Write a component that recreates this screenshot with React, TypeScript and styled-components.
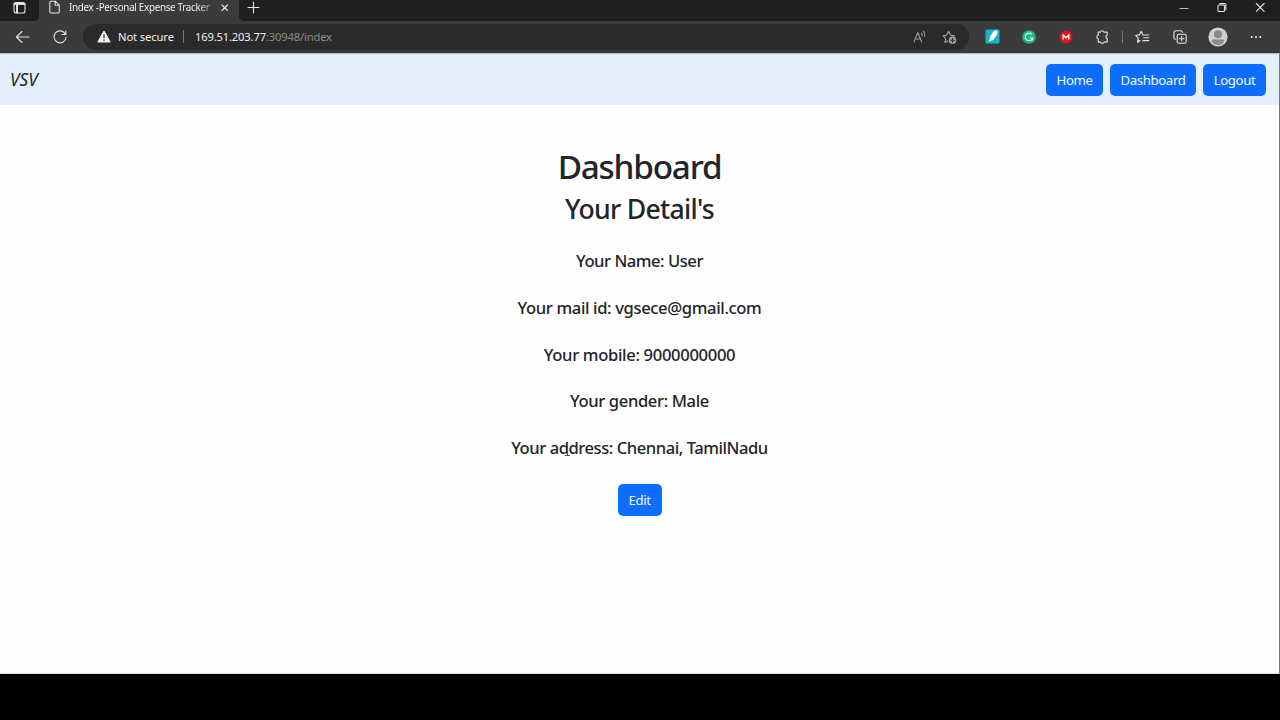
import React from "react";
import styled, { createGlobalStyle } from "styled-components";

const GlobalStyle = createGlobalStyle`
  *, *::before, *::after { box-sizing: border-box; }
  body { margin: 0; background: #000; font-family: "Noto Sans", "Open Sans", sans-serif; overflow: hidden; }
  h1, h2, p { margin: 0; }
  svg { display: block; flex: none; overflow: visible; }
`;

const Screen = styled.div`
  width: 1280px;
  height: 720px;
  display: flex;
  flex-direction: column;
  background: #000;
`;

const TabStrip = styled.div`
  height: 21px;
  display: flex;
  background: #3b3b3b;
`;

const TabActions = styled.div`
  width: 39px;
  padding: 1px 0 0 13px;
  background: #1f1f1e;
  border-bottom-right-radius: 5px;
`;

const Tab = styled.div`
  width: 200px;
  display: flex;
  align-items: flex-start;
  padding-left: 10px;
`;

const TabTitle = styled.span`
  width: 144px;
  margin-left: 8px;
  margin-top: -1px;
  white-space: nowrap;
  color: #f0f0f0;
  font-size: 9.9px;
  line-height: 16px;
  letter-spacing: -0.32px;
  mask-image: linear-gradient(to right, #000 128px, rgba(0, 0, 0, 0.3) 144px);
`;

const CloseTab = styled.div`
  margin: 4px 0 0 8px;
`;

const StripRest = styled.div`
  flex: 1;
  display: flex;
  justify-content: space-between;
  padding: 1px 15px 0 8px;
  background: #1f1f1e;
  border-bottom-left-radius: 5px;
`;

const WindowControls = styled.div`
  display: flex;
  gap: 29px;
  padding-top: 2px;
`;

const Toolbar = styled.div`
  height: 32px;
  display: flex;
  align-items: center;
  padding: 0 0 1px 15px;
  background: #3b3b3b;
`;

const ReloadSlot = styled.div`
  margin: 0 16px 0 23px;
`;

const AddressBar = styled.div`
  width: 886px;
  height: 26px;
  display: flex;
  align-items: center;
  padding: 0 12px 0 14px;
  border-radius: 13px;
  background: #2a2a2a;
`;

const Security = styled.span`
  margin-left: 7px;
  width: 65px;
  white-space: nowrap;
  color: #f2f2f2;
  font-size: 11.2px;
  letter-spacing: -0.1px;
`;

const Separator = styled.i<{ $height: number }>`
  width: 1px;
  height: ${(p) => p.$height}px;
  background: #777;
`;

const Url = styled.span`
  flex: 1;
  margin-left: 11px;
  color: #8d8d8d;
  font-size: 11.2px;
  letter-spacing: -0.16px;
`;

const Host = styled.span`
  color: #f2f2f2;
`;

const AddressIcons = styled.div`
  display: flex;
  align-items: center;
  gap: 15px;
`;

const IconGroup = styled.div<{ $slot: number; $before: number; $after: number }>`
  display: grid;
  grid-template-columns: repeat(4, ${(p) => p.$slot}px);
  place-items: center;
  margin: 0 ${(p) => p.$after}px 0 ${(p) => p.$before}px;
`;

const Page = styled.div`
  height: 621px;
  border-top: 1px solid #aeb8c1;
  border-right: 1px solid #777;
  border-bottom: 1px solid #dfe3e3;
  background: #fefefe;
`;

const NavBar = styled.nav`
  height: 51px;
  display: flex;
  align-items: center;
  justify-content: space-between;
  padding: 0 13px 0 10px;
  background: #e3f0fb;
`;

const Brand = styled.span`
  color: #202529;
  font-size: 17.3px;
  font-style: italic;
  font-weight: 400;
  letter-spacing: 0;
`;

const NavLinks = styled.div`
  display: flex;
  gap: 7px;
`;

const Button = styled.button<{ $width: number }>`
  width: ${(p) => p.$width}px;
  height: 32px;
  padding: 0;
  border: 0;
  border-radius: 5px;
  background: #0d6efd;
  color: #f4f8ff;
  font: 400 13.2px "Noto Sans", "Open Sans", sans-serif;
  letter-spacing: -0.38px;
`;

const Content = styled.main`
  display: flex;
  flex-direction: column;
  align-items: center;
  padding-top: 41px;
  color: #212529;
  font-weight: 500;
  white-space: nowrap;
`;

const Title = styled.h1`
  font-size: 33.3px;
  font-weight: 500;
  line-height: 40px;
  letter-spacing: -1.2px;
`;

const Subtitle = styled.h2`
  margin-top: 7.4px;
  font-size: 26.6px;
  font-weight: 500;
  line-height: 32px;
  letter-spacing: -0.7px;
`;

const Details = styled.div`
  display: flex;
  flex-direction: column;
  align-items: center;
  gap: 26.7px;
  margin: 26px 0 25.6px;
`;

const Detail = styled.p<{ $spacing: number }>`
  position: relative;
  font-size: 16.6px;
  line-height: 20px;
  letter-spacing: ${(p) => p.$spacing}px;
`;

const TextCursor = styled.svg`
  position: absolute;
  left: 53px;
  top: 3px;
`;

const details = [
  { text: "Your Name: User", spacing: -0.47 },
  { text: "Your mail id: vgsece@gmail.com", spacing: -0.37 },
  { text: "Your mobile: 9000000000", spacing: -0.33 },
  { text: "Your gender: Male", spacing: -0.37 },
  { text: "Your address: Chennai, TamilNadu", spacing: -0.46, cursor: true },
];

const line = { fill: "none", stroke: "#e4e4e4", strokeWidth: 1.1, strokeLinecap: "round", strokeLinejoin: "round" } as const;

export default function App() {
  return (
    <Screen>
      <GlobalStyle />
      <TabStrip>
        <TabActions>
          <svg width="13" height="13" {...line}>
            <rect x="1" y="1.5" width="11" height="10.5" rx="2" />
            <path d="M1.5 3h10M4 4v7.5" strokeWidth="2" />
          </svg>
        </TabActions>
        <Tab>
          <svg width="12" height="15" {...line}>
            <path d="M2 1.2h4.2l4 4v6.6a1.2 1.2 0 0 1-1.2 1.2H2A1.2 1.2 0 0 1 .8 11.8V2.4A1.2 1.2 0 0 1 2 1.2zM6.2 1.4v3.8H10" />
          </svg>
          <TabTitle>Index -Personal Expense Tracker</TabTitle>
          <CloseTab><svg width="7" height="7" {...line}><path d="M1 1l5.5 5.5M6.5 1L1 6.5" /></svg></CloseTab>
        </Tab>
        <StripRest>
          <svg width="13" height="13" {...line}><path d="M6.5 1v11M1 6.5h11" /></svg>
          <WindowControls>
            <svg width="9" height="9" {...line} strokeWidth="0.8"><path d="M0 5.5h8" /></svg>
            <svg width="9" height="9" {...line}><rect x="0" y="2" width="6.5" height="6.5" rx="1" /><path d="M1.7.6h4.8A1.2 1.2 0 0 1 7.9 1.8v5" /></svg>
            <svg width="9" height="9" {...line}><path d="M.3.5l7.8 7.8M8.1.5L.3 8.3" /></svg>
          </WindowControls>
        </StripRest>
      </TabStrip>
      <Toolbar>
        <svg width="15" height="14" {...line}><path d="M14 7H1.5M7 1.5L1.4 7L7 12.5" /></svg>
        <ReloadSlot>
          <svg width="14" height="14" {...line}><path d="M12.4 4.2A6 6 0 1 0 13 7.2M12.8.8v3.7H9" /></svg>
        </ReloadSlot>
        <AddressBar>
          <svg width="14" height="13" viewBox="0 0 14 13">
            <path d="M7 1L13.2 12H.8z" fill="#f5f5f5" stroke="#f5f5f5" strokeLinejoin="round" />
            <path d="M7 4.2v4M7 9.5v1.3" stroke="#2a2a2a" strokeWidth="1.3" />
          </svg>
          <Security>Not secure</Security>
          <Separator $height={13} />
          <Url><Host>169.51.203.77</Host>:30948/index</Url>
          <AddressIcons>
            <svg width="14" height="14" {...line} stroke="#9a9a9a">
              <path d="M1 12L4.8 2.5L8.6 12M2.2 9h5.2M8.5 3.2a3.2 3.2 0 0 1 .7 2.6M10.5 1.4a5.5 5.5 0 0 1 1.2 4.8" />
            </svg>
            <svg width="15" height="14" {...line} stroke="#a0a0a0">
              <path d="M6 11l-3 1.6.7-4L1 5.7l3.8-.6L6.6 1.2l1.8 3.9 4 .6-1 1.2" />
              <circle cx="10.5" cy="10.3" r="3.8" fill="#a0a0a0" stroke="none" />
              <path d="M10.5 8.3v4M8.5 10.3h4" stroke="#2a2a2a" />
            </svg>
          </AddressIcons>
        </AddressBar>
        <IconGroup $slot={36.7} $before={5} $after={1.2}>
          <svg width="15" height="15" viewBox="0 0 15 15">
            <rect x=".5" y=".5" width="14" height="14" rx="1.5" fill="#12b5c9" />
            <path d="M5.2 7L9 1.8Q10.5.8 12.5 1.8V5L8 11.3L4.6 11.8z" fill="#fff" />
            <path d="M3.4 13l1.4-3.2 2 1.5z" fill="#e8ffff" />
          </svg>
          <svg width="14" height="14" viewBox="0 0 14 14">
            <circle cx="7" cy="7" r="6.8" fill="#1fb58c" />
            <path d="M9.8 4.3A3.8 3.8 0 1 0 10.7 8H7.6M10.7 8v2.2" fill="none" stroke="#d8fff3" strokeWidth="1.1" />
          </svg>
          <svg width="14" height="14" viewBox="0 0 14 14">
            <circle cx="7" cy="7" r="6.5" fill="#df141d" />
            <path d="M4.2 9.4V5.2L7 7.8l2.8-2.6v4.2" fill="none" stroke="#fff" strokeWidth="1.4" />
          </svg>
          <svg width="14" height="14" {...line}>
            <path d="M3.2 2.1h2.3a1.7 1.7 0 0 1 3.3 0h3.4v3.2a1.7 1.7 0 0 0 0 3.3v3.5H8.8a1.7 1.7 0 0 1-3.3 0H3.2V8.8a1.8 1.8 0 0 1 0-3.5z" />
          </svg>
        </IconGroup>
        <Separator $height={12} />
        <IconGroup $slot={37.7} $before={1} $after={0}>
          <svg width="15" height="14" {...line}>
            <path d="M4 10.4l-1.5 1.8.7-4L.7 5.5l3.7-.6 1.8-3.6L8 4.9l5.8.1M8.8 7.8h5M7.8 10.6h6M5 10.8l-2.3 1.5" />
          </svg>
          <svg width="15" height="14" {...line}>
            <rect x="4.2" y="4.2" width="9" height="9" rx="1.8" />
            <path d="M8.7 6.4v4.6M6.4 8.7H11M2.3 9.3A2 2 0 0 1 .9 7.2V3A2.2 2.2 0 0 1 3.1.8h4.4A2.2 2.2 0 0 1 9.6 2.3" />
          </svg>
          <svg width="20" height="20" viewBox="0 0 20 20">
            <circle cx="10" cy="10" r="9.6" fill="#d2d0ce" />
            <circle cx="10" cy="7.3" r="4" fill="#8b8987" />
            <path d="M3.5 13.5Q3.5 12.5 5 12.5H15Q16.5 12.5 16.5 13.5Q14.5 18 10 18T3.5 13.5z" fill="#8b8987" />
          </svg>
          <svg width="12" height="4" fill="#eee"><circle cx="1.7" cy="2" r="1" /><circle cx="6" cy="2" r="1" /><circle cx="10.3" cy="2" r="1" /></svg>
        </IconGroup>
      </Toolbar>
      <Page>
        <NavBar>
          <Brand>VSV</Brand>
          <NavLinks>
            <Button $width={57}>Home</Button>
            <Button $width={86}>Dashboard</Button>
            <Button $width={63}>Logout</Button>
          </NavLinks>
        </NavBar>
        <Content>
          <Title>Dashboard</Title>
          <Subtitle>Your Detail's</Subtitle>
          <Details>
            {details.map((d) => (
              <Detail key={d.text} $spacing={d.spacing}>
                {d.text}
                {d.cursor && (
                  <TextCursor width="7" height="16" fill="none" stroke="#555" strokeWidth="1">
                    <path d="M3.5 1v13M1 14.5h5" />
                  </TextCursor>
                )}
              </Detail>
            ))}
          </Details>
          <Button $width={44}>Edit</Button>
        </Content>
      </Page>
    </Screen>
  );
}
